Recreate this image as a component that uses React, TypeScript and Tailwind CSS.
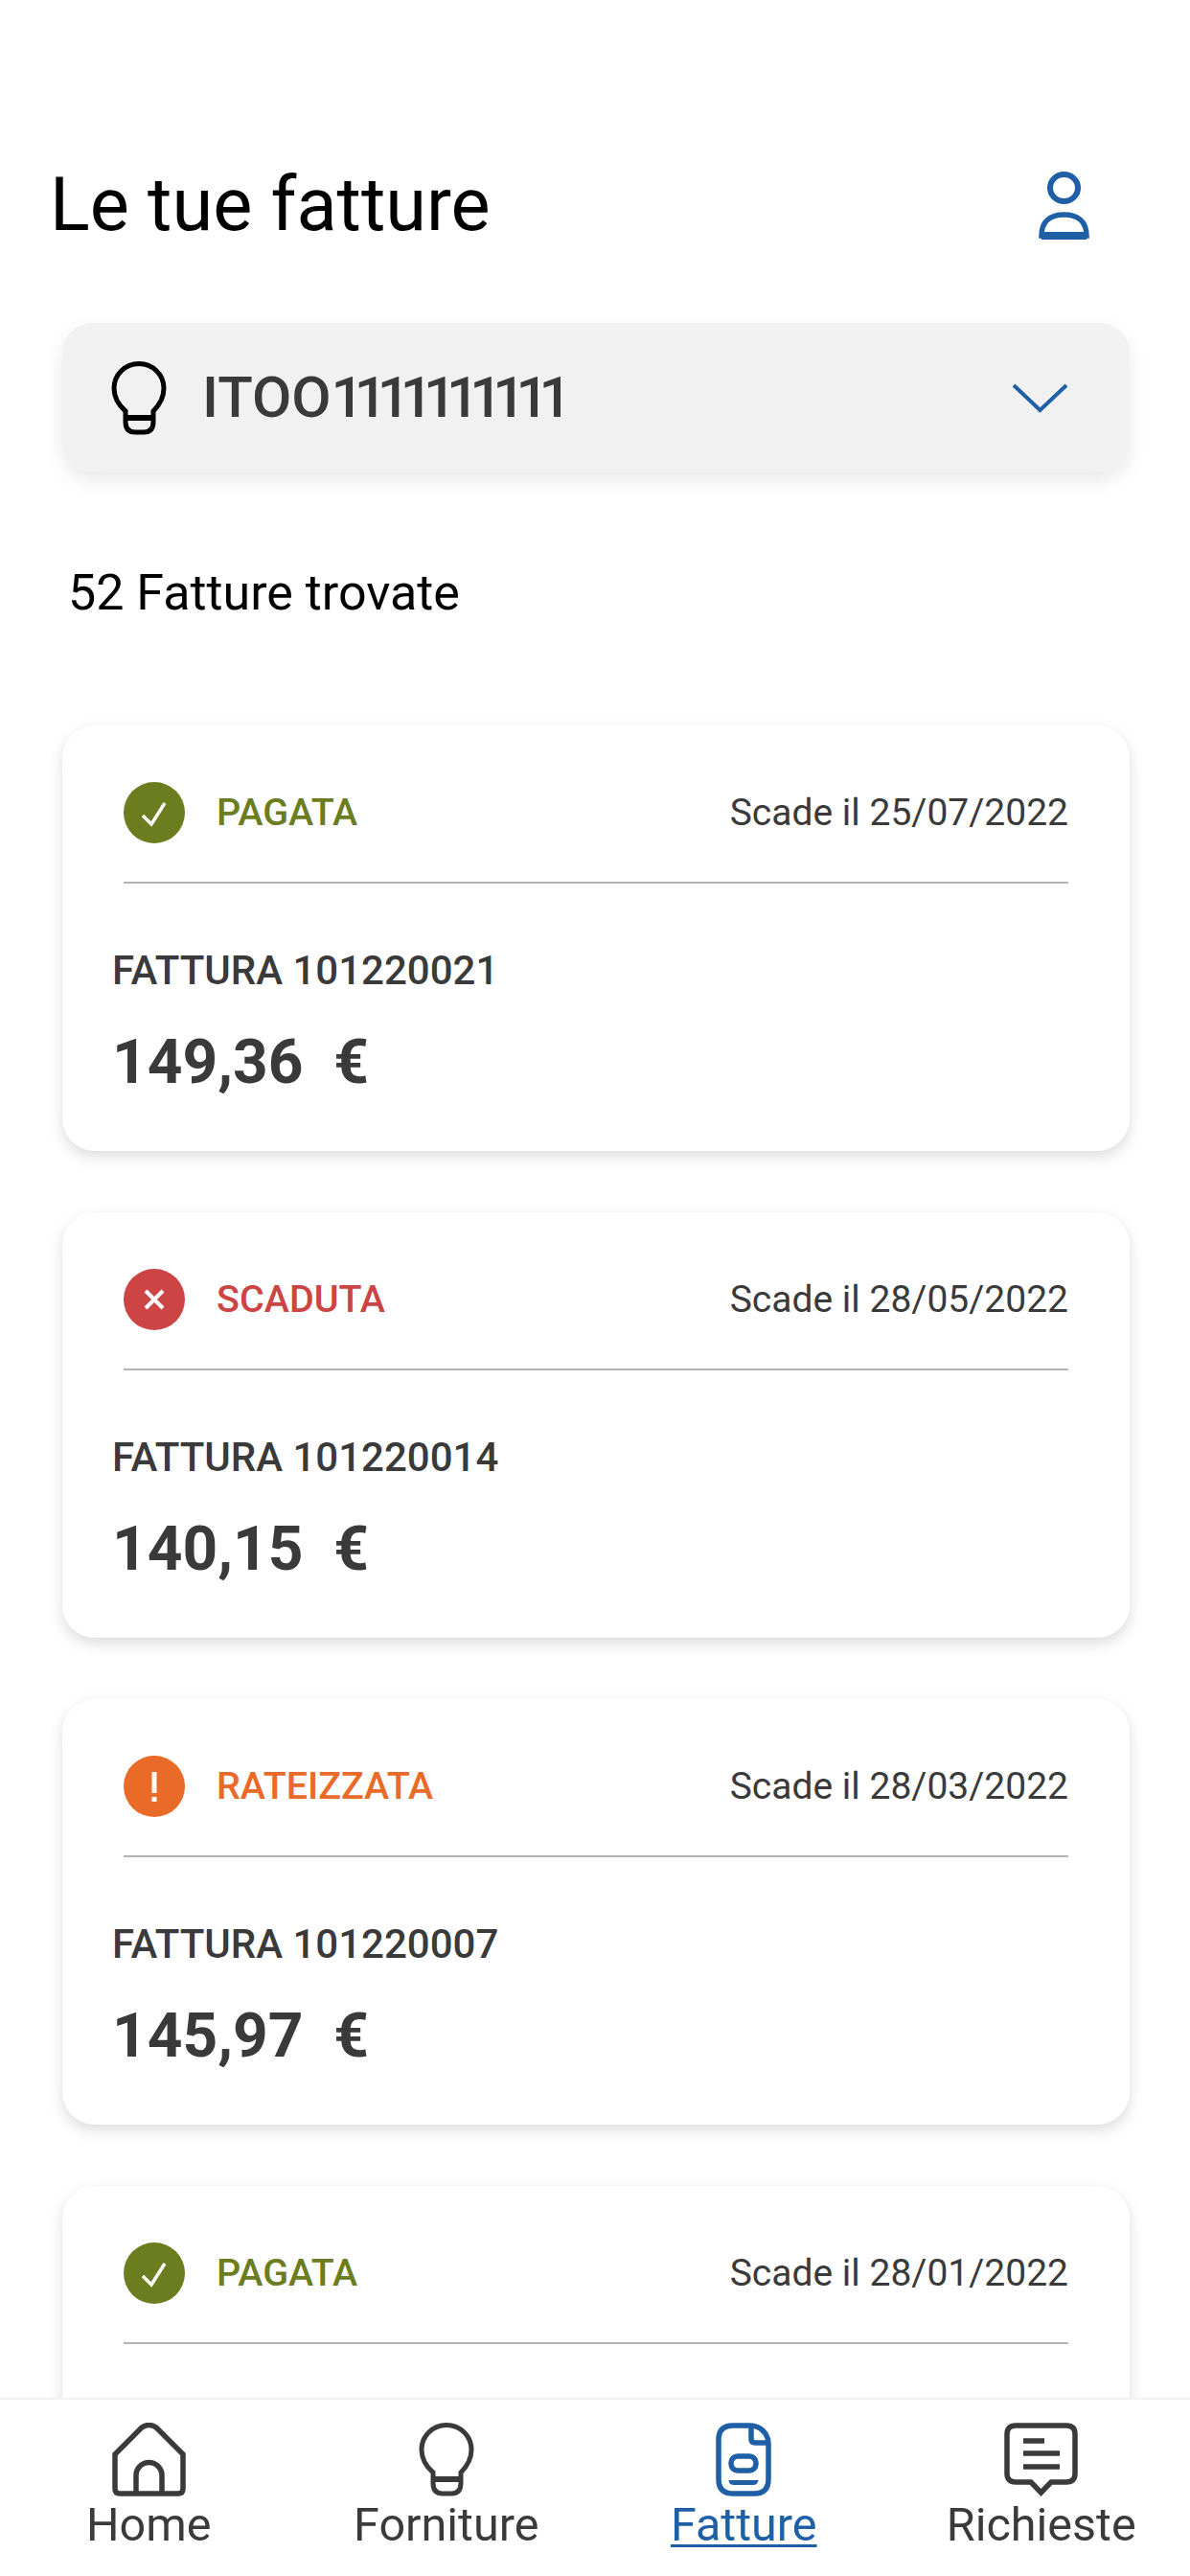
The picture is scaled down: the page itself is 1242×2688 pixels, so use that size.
const invoices = [
  { status: 'PAGATA', kind: 'paid', due: '25/07/2022', number: '101220021', amount: '149,36' },
  { status: 'SCADUTA', kind: 'late', due: '28/05/2022', number: '101220014', amount: '140,15' },
  { status: 'RATEIZZATA', kind: 'plan', due: '28/03/2022', number: '101220007', amount: '145,97' },
  // only the top of this one is on screen
  { status: 'PAGATA', kind: 'paid', due: '28/01/2022' },
]

function BulbIcon({ className }: { className: string }) {
  return (
    <svg viewBox="0 0 58 77" className={className} fill="none" stroke="currentColor" strokeWidth="5">
      <path d="M15 52 C7 45 3 37 3 28 A26 25.500 0 0 1 55 28 C55 37 51 45 44 52 V63 Q44 74 34 74 H25 Q15 74 15 63 Z" />
      <path d="M15 59 H44" strokeWidth="6" />
    </svg>
  )
}

function StatusIcon({ kind }: { kind: string }) {
  if (kind === 'paid') {
    return (
      <svg viewBox="0 0 64 64" className="h-[64px] w-[64px]">
        <circle cx="32" cy="32" r="32" fill="#6b7d1f" />
        <path d="M20 35 L29 44 L43 22" fill="none" stroke="#fff" strokeWidth="3.500" />
      </svg>
    )
  }
  if (kind === 'late') {
    return (
      <svg viewBox="0 0 64 64" className="h-[64px] w-[64px]">
        <circle cx="32" cy="32" r="32" fill="#cc4444" />
        <path d="M23 23 L41 41 M41 23 L23 41" fill="none" stroke="#fff" strokeWidth="4" />
      </svg>
    )
  }
  return (
    <svg viewBox="0 0 64 64" className="h-[64px] w-[64px]">
      <circle cx="32" cy="32" r="32" fill="#ea6a28" />
      <path d="M32 17 V39" fill="none" stroke="#fff" strokeWidth="5" />
      <rect x="29.500" y="43" width="5" height="5" fill="#fff" />
    </svg>
  )
}

const statusText: Record<string, string> = {
  paid: 'text-[#6b7d1f]',
  late: 'text-[#cc4444]',
  plan: 'text-[#ea6a28]',
}

function InvoiceCard({ invoice }: { invoice: (typeof invoices)[number] }) {
  return (
    <div className="h-[444px] shrink-0 rounded-[34px] bg-white pt-[59px] shadow-[0_6px_16px_rgba(0,0,0,0.14)]">
      <div className="mx-[64px] flex h-[64px] items-center justify-between">
        <div className="flex items-center gap-[33px]">
          <StatusIcon kind={invoice.kind} />
          <span className={`text-[39.5px] font-medium leading-[48px] ${statusText[invoice.kind]}`}>{invoice.status}</span>
        </div>
        <span className="text-[39px] leading-[48px] text-[#3a3a3a]">Scade il {invoice.due}</span>
      </div>
      <div className="mx-[64px] mt-[40px] border-t-[2px] border-[#b3b3b3]" />
      {invoice.number && (
        <div className="px-[52px]">
          <div className="mt-[67px] text-[42px] font-medium leading-[48px] text-[#3a3a3a]">FATTURA {invoice.number}</div>
          <div className="mt-[34px] whitespace-pre text-[64px] font-bold leading-[76px] text-[#3a3a3a]">{invoice.amount}  €</div>
        </div>
      )}
    </div>
  )
}

function NavItem({ label, active, children }: { label: string; active?: boolean; children: React.ReactNode }) {
  return (
    <div className={`flex flex-col items-center ${active ? 'text-[#1f5fa6]' : 'text-[#3a3a3a]'}`}>
      <div className="flex h-[77px] items-center justify-center">{children}</div>
      <span className={`mt-[3px] text-[48.5px] leading-[54px] ${active ? 'underline decoration-[3px] underline-offset-[4px]' : ''}`}>{label}</span>
    </div>
  )
}

export default function App() {
  return (
    <div className="flex h-[2688px] w-[1242px] flex-col overflow-hidden bg-white font-[Roboto,sans-serif]">
      <div className="min-h-0 flex-1 overflow-hidden">
        <div className="flex items-center justify-between pl-[52px] pr-[105px] pt-[172px]">
          <h1 className="text-[77.5px] font-normal leading-[84px] text-black">Le tue fatture</h1>
          <svg viewBox="0 0 53 71" className="h-[71px] w-[53px] text-[#1f5fa6]" fill="none" stroke="currentColor" strokeWidth="5.500">
            <ellipse cx="26.500" cy="17" rx="14.500" ry="14" strokeWidth="6" />
            <path d="M3 67 C3 51 13 45 26.500 45 C40 45 50 51 50 67 Z" />
            <path d="M3 67 H50" strokeWidth="8" />
          </svg>
        </div>

        <div className="ml-[65px] mr-[63px] mt-[81px] flex h-[156px] items-center rounded-[32px] bg-[#f1f1f1] pl-[51px] pr-[64px] shadow-[0_8px_20px_rgba(0,0,0,0.09)]">
          <BulbIcon className="h-[77px] w-[58px] text-black" />
          <span className="ml-[37px] flex-1 text-[60px] font-medium leading-[70px] text-[#3a3a3a]">
            ITOO<span className="tracking-[-10px]">1111111111</span>
          </span>
          <svg viewBox="0 0 59 31" className="h-[31px] w-[59px] text-[#1f5fa6]" fill="none" stroke="currentColor" strokeWidth="4">
            <path d="M2 2 L29.500 28 L57 2" />
          </svg>
        </div>

        <div className="ml-[71px] mt-[98px] text-[52px] leading-[56px] text-black">52 Fatture trovate</div>

        <div className="ml-[65px] mr-[63px] mt-[110px] flex flex-col gap-[64px]">
          {invoices.map((invoice) => (
            <InvoiceCard key={invoice.due} invoice={invoice} />
          ))}
        </div>
      </div>

      <div className="grid h-[186px] shrink-0 grid-cols-4 border-t-[2px] border-[#f2f2f2] bg-white pt-[24px]">
        <NavItem label="Home">
          <svg viewBox="0 0 77 77" className="h-[77px] w-[77px]" fill="none" stroke="currentColor" strokeWidth="5.500">
            <path d="M3 33 L31 5 Q38.500 0 46 5 L74 33 V69 Q74 74 69 74 H8 Q3 74 3 69 Z" />
            <path d="M25 74 V55 A13.500 13.500 0 0 1 52 55 V74" />
          </svg>
        </NavItem>
        <NavItem label="Forniture">
          <BulbIcon className="h-[77px] w-[58px]" />
        </NavItem>
        <NavItem label="Fatture" active>
          <svg viewBox="0 0 58 77" className="h-[77px] w-[58px]" fill="none" stroke="currentColor" strokeWidth="5.500">
            <path d="M18 3 H36 C47 3 55 12 55 22 V59 Q55 74 40 74 H18 Q3 74 3 59 V18 Q3 3 18 3 Z" />
            <path d="M37 3 V17 Q37 21 41 21 H55" />
            <rect x="16" y="35" width="26" height="15" rx="7" />
            <path d="M13.500 60 H44.500 Q44 65 39 65 H19 Q14 65 13.500 60 Z" fill="currentColor" stroke="none" />
          </svg>
        </NavItem>
        <NavItem label="Richieste">
          <svg viewBox="0 0 77 77" className="h-[77px] w-[77px]" fill="none" stroke="currentColor" strokeWidth="5.500">
            <path d="M12 3 H65 Q74 3 74 12 V53 Q74 62 65 62 H49 L38.500 73 L28 62 H12 Q3 62 3 53 V12 Q3 3 12 3 Z" />
            <path d="M20 19 H42 M20 32 H58 M20 46 H58" />
          </svg>
        </NavItem>
      </div>
    </div>
  )
}
